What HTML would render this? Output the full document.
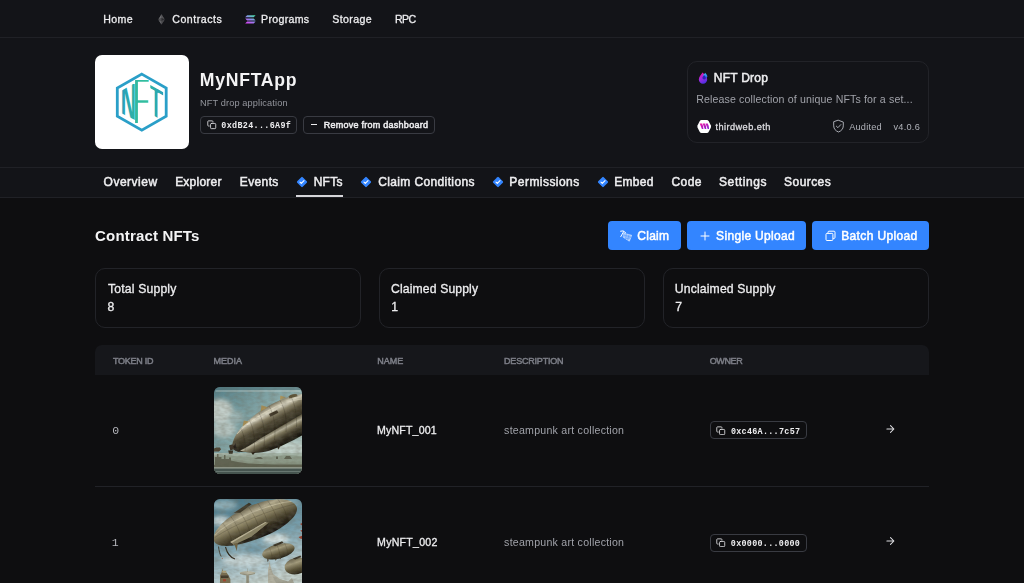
<!DOCTYPE html>
<html lang="en">
<head>
<meta charset="utf-8">
<title>MyNFTApp | thirdweb dashboard</title>
<style>
*{box-sizing:border-box;margin:0;padding:0}
html,body{width:1024px;height:583px;overflow:hidden;background:#0e0e10}
body{position:relative;font-family:"Liberation Sans",Arial,sans-serif;color:#ededef}
.abs{position:absolute}
.t{position:absolute;white-space:nowrap;line-height:1;font-weight:normal}
.b{font-weight:bold}
.s{-webkit-text-stroke:0.5px currentColor}
.m{-webkit-text-stroke:0.3px currentColor}
.mb{font-family:"Liberation Mono","DejaVu Sans Mono",monospace;font-weight:bold}
.mr{font-family:"Liberation Mono","DejaVu Sans Mono",monospace}
#topnav{position:absolute;left:0;top:0;width:1024px;height:38px;background:#131418;border-bottom:1px solid #202126}
#header{position:absolute;left:0;top:38px;width:1024px;height:129px;background:#131418}
#tabbar{position:absolute;left:0;top:167px;width:1024px;height:31px;background:#131418;border-top:1px solid #202126;border-bottom:1px solid #202126}
.btn-o{position:absolute;border:1px solid #393b42;border-radius:4px;height:18px}
.card{position:absolute;border:1px solid #222328;border-radius:10px}
.bbtn{position:absolute;top:221px;height:29px;background:#3385ff;border-radius:4px}
</style>
</head>
<body>

<div id="topnav"></div>
<div id="header"></div>
<div id="tabbar"></div>

<!-- nav icons -->
<svg class="abs" style="left:158px;top:14px" width="7" height="11" viewBox="0 0 7 11">
  <polygon points="3.5,0.2 6.6,5.5 3.5,10.6 0.4,5.5" fill="#4b4b4e"/>
  <polygon points="3.5,0.2 0.4,5.3 3.5,4.1" fill="#6c6c6f"/>
  <polygon points="3.5,0.2 3.5,4.1 6.6,5.3" fill="#535356"/>
  <polygon points="0.4,5.3 3.5,4.1 3.5,7.1" fill="#4c4c4f"/>
  <polygon points="3.5,4.1 6.6,5.3 3.5,7.1" fill="#2b2b2e"/>
  <polygon points="0.4,6 3.5,7.7 3.5,10.6" fill="#66666a"/>
  <polygon points="6.6,6 3.5,7.7 3.5,10.6" fill="#46464a"/>
</svg>
<svg class="abs" style="left:245px;top:15px" width="11" height="9" viewBox="0 0 11 9">
  <defs><linearGradient id="sol" x1="0.9" y1="0" x2="0.1" y2="1">
    <stop offset="0" stop-color="#45e0a4"/><stop offset="0.5" stop-color="#9088ee"/><stop offset="1" stop-color="#de3df6"/></linearGradient></defs>
  <path d="M2.1 0.3H10.6L8.7 2.3H0.2Z M0.2 3.4H8.7L10.6 5.4H2.1Z M2.1 6.5H10.6L8.7 8.5H0.2Z" fill="url(#sol)"/>
</svg>

<!-- copy icon (header address) -->
<svg class="abs" style="left:207.1px;top:120.2px" width="9.6" height="9.6" viewBox="0 0 10 10" fill="none" stroke="#dcdce0" stroke-width="0.9" stroke-linecap="round" stroke-linejoin="round">
  <rect x="3.7" y="3.6" width="5.4" height="5.4" rx="0.9"/>
  <path d="M2.3 6.3H1.6A0.8 0.8 0 0 1 0.8 5.500V1.7A0.8 0.8 0 0 1 1.6 0.9H5.400A0.8 0.8 0 0 1 6.200 1.7V2.3"/>
</svg>
<!-- minus icon -->
<div class="abs" style="left:311px;top:124px;width:6px;height:1px;background:#ededef"></div>

<!-- NFT drop icon -->
<svg class="abs" style="left:698px;top:72px" width="10" height="12" viewBox="0 0 10 12">
  <defs>
    <linearGradient id="dr1" x1="0.2" y1="0" x2="0.6" y2="1"><stop offset="0" stop-color="#f4149e"/><stop offset="0.5" stop-color="#a02be0"/><stop offset="1" stop-color="#4a2fe2"/></linearGradient>
    <linearGradient id="dr2" x1="0" y1="0" x2="0" y2="1"><stop offset="0" stop-color="#3cc8f4"/><stop offset="1" stop-color="#2a4be8"/></linearGradient>
  </defs>
  <path d="M4.6 0.6C6.2 2.6 9.2 4.9 9.2 7.6A4.2 4.2 0 0 1 0.8 7.6C0.8 4.9 3.2 2.6 4.6 0.6Z" fill="url(#dr1)"/>
  <path d="M7.2 0.8C8 2 9.4 3.1 9.4 4.6A2.3 2.3 0 0 1 4.9 4.6C4.9 3.1 6.4 2 7.2 0.8Z" fill="url(#dr2)"/>
  <path d="M6.2 3.2C6.9 4 7.9 4.9 7.9 6A1.8 1.8 0 0 1 4.4 6C4.4 4.9 5.5 4 6.2 3.2Z" fill="#2b22b8"/>
</svg>

<!-- thirdweb avatar -->
<svg class="abs" style="left:696.7px;top:119px" width="15" height="15" viewBox="0 0 15 15">
  <defs><linearGradient id="twg" x1="0" y1="0" x2="0.8" y2="1"><stop offset="0" stop-color="#f5149f"/><stop offset="1" stop-color="#8a22d4"/></linearGradient></defs>
  <path d="M4.5 0.9H9.9Q11 0.9 11.6 1.9L13.8 6.3Q14.3 7.5 13.8 8.7L11.6 13.1Q11 14.1 9.9 14.1H4.5Q3.4 14.1 2.8 13.1L0.6 8.7Q0.1 7.5 0.6 6.3L2.8 1.9Q3.4 0.9 4.5 0.9Z" fill="#fff"/>
  <path d="M2.7 4.4H5Q6.6 7.2 6.4 10H4.9Z M5.6 4.4H7.9Q9.5 7.2 9.3 10H7.8Z M8.5 4.4H10.8Q12.3 7.2 12.1 10H10.7Z" fill="url(#twg)"/>
</svg>

<!-- audited shield -->
<svg class="abs" style="left:832px;top:119px" width="13" height="14" viewBox="0 0 13 14" fill="none" stroke="#b0b2b9" stroke-width="0.95" stroke-linecap="round" stroke-linejoin="round">
  <path d="M6.5 1.3L11.3 3.1V6.9C11.3 9.9 9.2 12 6.5 13C3.8 12 1.7 9.9 1.7 6.9V3.1Z"/>
  <path d="M4.4 7.2L5.9 8.7L8.8 5.6"/>
</svg>

<!-- tab extension diamonds -->
<svg width="0" height="0" style="position:absolute"><defs>
  <g id="dia"><rect x="-3.9" y="-3.9" width="7.8" height="7.8" rx="1" transform="rotate(45)" fill="#3385ff"/><path d="M-2 0.1L-0.7 1.4L2 -1.3" fill="none" stroke="#fff" stroke-width="1.1" stroke-linecap="round" stroke-linejoin="round"/></g>
</defs></svg>
<svg class="abs" style="left:296px;top:176px" width="12" height="12" viewBox="-6 -6 12 12"><use href="#dia"/></svg>
<svg class="abs" style="left:360px;top:176px" width="12" height="12" viewBox="-6 -6 12 12"><use href="#dia"/></svg>
<svg class="abs" style="left:492px;top:176px" width="12" height="12" viewBox="-6 -6 12 12"><use href="#dia"/></svg>
<svg class="abs" style="left:596.5px;top:176px" width="12" height="12" viewBox="-6 -6 12 12"><use href="#dia"/></svg>

<!-- claim icon (pickaxe + gem) -->
<svg class="abs" style="left:619.5px;top:229.5px;z-index:3" width="13" height="12" viewBox="0 0 13 12" fill="none" stroke="#fff" stroke-linecap="round" stroke-linejoin="round">
  <path d="M0.6 1.1Q3.2 -0.4 5.7 2.7" stroke-width="1"/>
  <path d="M3.7 1.5L0.8 6.6" stroke-width="1"/>
  <path d="M4 3.3L11.6 5.2L10.9 7.6L9.3 11.2L3.5 7.4Z" fill="#fff" fill-opacity="0.5" stroke-width="0.5"/>
  <path d="M3.8 5.2L11.2 7M6.4 3.9L5.6 8.8M9 4.6L7.6 10M5.6 8.8L10.9 7.6" stroke="#3385ff" stroke-width="0.45" opacity="0.8"/>
</svg>
<!-- plus icon -->
<svg class="abs" style="left:699.5px;top:230.5px;z-index:3" width="10" height="10" viewBox="0 0 10 10" fill="none" stroke="#fff" stroke-width="1" stroke-linecap="round"><path d="M5 1V9M1 5H9"/></svg>
<!-- batch icon -->
<svg class="abs" style="left:824.5px;top:229.5px;z-index:3" width="12" height="12" viewBox="0 0 12 12" fill="none" stroke="#fff" stroke-width="1" stroke-linejoin="round">
  <rect x="1" y="3.4" width="6.9" height="7.1" rx="1"/>
  <path d="M3 3.2V2.2A1 1 0 0 1 4 1.2H9A1 1 0 0 1 10 2.2V7.4A1 1 0 0 1 9 8.4H8.1"/>
</svg>

<!-- row copy icons + arrows -->
<svg width="0" height="0" style="position:absolute"><defs>
  <g id="cpy" fill="none" stroke="#dcdce0" stroke-width="0.9" stroke-linecap="round" stroke-linejoin="round"><rect x="3.7" y="3.6" width="5.4" height="5.4" rx="0.9"/><path d="M2.3 6.3H1.6A0.8 0.8 0 0 1 0.8 5.500V1.7A0.8 0.8 0 0 1 1.6 0.9H5.400A0.8 0.8 0 0 1 6.200 1.7V2.3"/></g>
  <g id="arr" fill="none" stroke="#dedee2" stroke-width="1.05" stroke-linecap="round" stroke-linejoin="round"><path d="M1.900 5H8.800M5.500 1.600L8.900 5L5.500 8.400"/></g>
</defs></svg>
<svg class="abs" style="left:716.1px;top:425.5px" width="9.6" height="9.6" viewBox="0 0 10 10"><use href="#cpy"/></svg>
<svg class="abs" style="left:716.1px;top:537.9px" width="9.6" height="9.6" viewBox="0 0 10 10"><use href="#cpy"/></svg>
<svg class="abs" style="left:884.9px;top:424px" width="10" height="10" viewBox="0 0 10 10"><use href="#arr"/></svg>
<svg class="abs" style="left:884.9px;top:536.3px" width="10" height="10" viewBox="0 0 10 10"><use href="#arr"/></svg>


<!-- contract logo -->
<div class="abs" id="logo" style="left:95px;top:55px;width:94px;height:94px;background:#fff;border-radius:7px"></div>

<!-- contract logo artwork -->
<svg class="abs" style="left:95px;top:55px" width="94" height="94" viewBox="95 55 94 94" font-family="Liberation Sans, Arial, sans-serif" font-weight="bold">
  <defs>
    <linearGradient id="gN" x1="0" y1="0" x2="1" y2="0"><stop offset="0" stop-color="#279dbd"/><stop offset="1" stop-color="#2fb5a2"/></linearGradient>
    <linearGradient id="gF" x1="0" y1="0" x2="1" y2="0"><stop offset="0" stop-color="#2fb8a0"/><stop offset="1" stop-color="#34c09e"/></linearGradient>
    <linearGradient id="gT" x1="0" y1="0" x2="1" y2="0"><stop offset="0" stop-color="#2fb5a2"/><stop offset="1" stop-color="#279fba"/></linearGradient>
    <clipPath id="fclip" clipPathUnits="userSpaceOnUse">
      <rect x="135" y="78" width="2.9" height="46"/>
      <rect x="135" y="78.5" width="14" height="3.2"/>
      <rect x="135" y="100.3" width="13.6" height="2.5"/>
    </clipPath>
    <clipPath id="nclip" clipPathUnits="userSpaceOnUse">
      <polygon points="121,90.9 136,82.3 136,120.6 121,112.9"/>
    </clipPath>
    <clipPath id="tclip" clipPathUnits="userSpaceOnUse">
      <polygon points="150.3,85 163.2,92.2 163.2,95.8 150.3,88.6"/>
      <rect x="154.5" y="89" width="3.1" height="31"/>
    </clipPath>
  </defs>
  <polygon points="141.8,74.1 166.2,88 166.2,116.2 141.8,130.1 117.3,116.2 117.3,88" fill="none" stroke="#2a9fc8" stroke-width="2.8" stroke-linejoin="miter"/>
  <g font-size="10">
    <g clip-path="url(#nclip)"><text transform="translate(120.7,120.5) scale(2.12,5.45)" fill="url(#gN)">N</text></g>
    <g clip-path="url(#fclip)"><text transform="translate(132.9,122.8) scale(2.7,6.37)" fill="url(#gF)">F</text></g>
    <g clip-path="url(#tclip)"><text transform="translate(148.5,112.8) skewY(29) scale(2.5,4.4)" fill="url(#gT)">T</text></g>
  </g>
</svg>


<!-- address + remove buttons -->
<div class="btn-o" style="left:200px;top:116px;width:97px"></div>
<div class="btn-o" style="left:303px;top:116px;width:132px"></div>

<!-- published contract card -->
<div class="card" id="pubcard" style="left:687px;top:61px;width:242px;height:82px"></div>

<!-- active tab underline -->
<div class="abs" style="left:296px;top:195px;width:47px;height:2px;background:#d6d6da"></div>

<!-- action buttons -->
<div class="bbtn" style="left:608px;width:73px"></div>
<div class="bbtn" style="left:687px;width:119px"></div>
<div class="bbtn" style="left:812px;width:117px"></div>

<!-- supply stats -->
<div class="card" style="left:95px;top:268px;width:266px;height:60px"></div>
<div class="card" style="left:379px;top:268px;width:266px;height:60px"></div>
<div class="card" style="left:663px;top:268px;width:266px;height:60px"></div>

<!-- table -->
<div class="abs" id="thead" style="left:95px;top:345px;width:834px;height:30px;background:#16171b;border-radius:7px 7px 0 0"></div>
<div class="abs" style="left:95px;top:486px;width:834px;height:1px;background:#212227"></div>

<div class="btn-o" style="left:710px;top:421px;width:97px"></div>
<div class="btn-o" style="left:710px;top:533px;width:97px;top:533.5px"></div>

<!-- NFT media thumbnails -->
<svg class="abs" id="img0" style="left:214px;top:387px;border-radius:6px" width="88" height="87" viewBox="0 0 88 87">
  <defs>
    <linearGradient id="a_sky" x1="0" y1="0" x2="1" y2="0.9"><stop offset="0" stop-color="#557f87"/><stop offset="0.45" stop-color="#86a8a9"/><stop offset="1" stop-color="#b7c9c2"/></linearGradient>
    <linearGradient id="a_hull" gradientUnits="userSpaceOnUse" x1="50" y1="17" x2="63.5" y2="42"><stop offset="0" stop-color="#3f3a2a"/><stop offset="0.12" stop-color="#6f6852"/><stop offset="0.27" stop-color="#c9c4ae"/><stop offset="0.36" stop-color="#d9d5c2"/><stop offset="0.5" stop-color="#8a8268"/><stop offset="0.68" stop-color="#4f4834"/><stop offset="1" stop-color="#2a261a"/></linearGradient>
    <linearGradient id="a_hull2" gradientUnits="userSpaceOnUse" x1="64" y1="38" x2="73" y2="55"><stop offset="0" stop-color="#2a261a"/><stop offset="0.14" stop-color="#6a644e"/><stop offset="0.3" stop-color="#bab59e"/><stop offset="0.45" stop-color="#7b745a"/><stop offset="0.68" stop-color="#3e3828"/><stop offset="1" stop-color="#17140d"/></linearGradient>
    <linearGradient id="a_gnd" x1="0" y1="0" x2="0" y2="1"><stop offset="0" stop-color="#a9b9ad"/><stop offset="0.4" stop-color="#8b9886"/><stop offset="1" stop-color="#6c725e"/></linearGradient>
    <filter id="a_bl" x="-10%" y="-10%" width="120%" height="120%"><feGaussianBlur stdDeviation="0.55"/></filter>
    <filter id="a_nz" x="0" y="0" width="100%" height="100%"><feTurbulence type="fractalNoise" baseFrequency="0.16 0.3" numOctaves="2" seed="4"/><feColorMatrix type="matrix" values="0 0 0 0 0.16  0 0 0 0 0.15  0 0 0 0 0.11  0 0 0 1.4 -0.45"/></filter>
    <filter id="a_bl2" x="-20%" y="-20%" width="140%" height="140%"><feGaussianBlur stdDeviation="2.2"/></filter>
  </defs>
  <rect width="88" height="87" fill="url(#a_sky)"/>
  <g filter="url(#a_bl2)">
    <ellipse cx="6" cy="24" rx="13" ry="12" fill="#c3cfca"/>
    <ellipse cx="10" cy="42" rx="12" ry="9" fill="#b3c3bf"/>
    <ellipse cx="22" cy="30" rx="7" ry="6" fill="#9db6b5"/>
    <ellipse cx="70" cy="62" rx="24" ry="7" fill="#c2d2cb"/>
  </g>
  <rect x="0" y="66" width="88" height="21" fill="url(#a_gnd)"/>
  <g filter="url(#a_bl)">
    <path d="M0 70Q12 67.5 22 69T46 70T70 68.5T88 69.5V73H0Z" fill="#8f9d8c"/>
    <path d="M1 78V70H3V67H4.5V70H7.500V72H10V68H11.5V72H15V70.500H17V73.500L24 75L34 76.500L60 77.500H88V80.600H0V78Z" fill="#575a48" opacity="0.85"/>
    <path d="M40 72L44 70H47L49 72ZM62 72V69.5H64V72ZM70 72L72 69H76L78 72Z" fill="#5e6452"/>
    <path d="M0 61.5L2.5 60.5H6L7 62.5L5 64.5H0Z" fill="#4b4330"/>
    <!-- main hull (upper lobe) -->
    <path d="M18.2 60.6C18 55 21 48 27 41C35 31.5 47 22.5 61 15.5C70 11 80 8.2 88 7V31L45.5 56C41 59.500 36 63 30 65C25 65.600 20.500 64 18.200 60.600Z" fill="url(#a_hull)"/>
    <!-- lower lobe -->
    <path d="M26 63.500C33 60.500 40 56 45.500 52L88 27V48.500C78 54 66 60 56 63.500C46 66.600 34 67 26 63.500Z" fill="url(#a_hull2)"/>
    <path d="M18.2 60.6C19 62.8 22 64.6 26 65.2C23 63 21.5 60 22 56Z" fill="#221e14"/>
    <!-- hull plating ribs -->
    <g fill="none" stroke="#1f1b12" stroke-width="0.45" opacity="0.5">
      <path d="M27 41.5C30 48 32 57 31 65"/><path d="M35.5 33.5C39.5 41 41.5 52 40 64"/><path d="M45 26C49.5 34 51.5 46 50 59.5"/><path d="M55 19C60 27 62 40 60.5 53"/><path d="M66 13.5C71 21 73 33 72 45"/><path d="M77 9.8C81 17 83 28 82.5 40"/>
    </g>
    <path d="M23 47C33 36 50 24 70 16.5C77 14 83 12.6 88 12" fill="none" stroke="#efe9d2" stroke-width="0.9" opacity="0.55"/>
    <!-- gondola / hatch on top -->
    <path d="M55 27L63 23.2L64.4 25.8L56.5 29.8Z" fill="#3a3222"/>
    <path d="M74.5 9.5C76 7.6 80 6.6 83 7.4L83.5 9.2L75.5 11.6Z" fill="#5d5238"/>
    <!-- dorsal spikes -->
    <path d="M28.5 39.5L29.8 33.6L35 34.6Z" fill="#a88f55"/>
    <path d="M46.5 24.5L47.5 18.2L53.5 20.2Z" fill="#a88f55"/>
    <path d="M66 13L66.4 8.4L72 10.4Z" fill="#ad955c"/>
    <!-- nose cap + engine -->
    <path d="M15 58.5L18.6 57.2L20.4 62L16.4 63.4Z" fill="#3a3325"/>
    <path d="M14.2 63.5H19.2L18.5 66.8H15Z" fill="#2f291d"/>
    <path d="M37 65.4L39 68L41.5 65Z M63 59.8L64.5 62.4L66.5 58.6Z" fill="#2a2418"/>
  </g>
  <rect width="88" height="87" filter="url(#a_nz)" opacity="0.45"/>
  <!-- printed frame lines -->
  <rect x="1.5" y="3.6" width="85" height="0.8" fill="#d3ddd8" opacity="0.7"/>
  <rect x="0" y="0" width="88" height="3" fill="#4c6f76" opacity="0.55"/>
  <rect x="0" y="80.6" width="88" height="0.9" fill="#cfd8d2" opacity="0.85"/>
  <rect x="0" y="81.5" width="88" height="5.5" fill="#46544f"/>
  <rect x="2" y="84.2" width="84" height="0.6" fill="#9aa9a2" opacity="0.7"/>
</svg>

<svg class="abs" id="img1" style="left:214px;top:499px;border-radius:6px 6px 0 0" width="88" height="84" viewBox="0 0 88 84">
  <defs>
    <linearGradient id="b_sky" x1="0.2" y1="0" x2="0.5" y2="1"><stop offset="0" stop-color="#4a7686"/><stop offset="0.5" stop-color="#789fad"/><stop offset="0.85" stop-color="#b3c9ce"/><stop offset="1" stop-color="#c3d0cc"/></linearGradient>
    <linearGradient id="b_hull" x1="0.42" y1="0" x2="0.56" y2="1"><stop offset="0" stop-color="#635c46"/><stop offset="0.18" stop-color="#b2aa8e"/><stop offset="0.4" stop-color="#918868"/><stop offset="0.58" stop-color="#5e563c"/><stop offset="0.78" stop-color="#302a1c"/><stop offset="1" stop-color="#191610"/></linearGradient>
    <linearGradient id="b_hull2" x1="0.4" y1="0" x2="0.55" y2="1"><stop offset="0" stop-color="#665f48"/><stop offset="0.3" stop-color="#a39b7c"/><stop offset="0.65" stop-color="#595136"/><stop offset="1" stop-color="#231e14"/></linearGradient>
    <filter id="b_bl" x="-10%" y="-10%" width="120%" height="120%"><feGaussianBlur stdDeviation="0.5"/></filter>
    <filter id="b_nz" x="0" y="0" width="100%" height="100%"><feTurbulence type="fractalNoise" baseFrequency="0.16 0.3" numOctaves="2" seed="9"/><feColorMatrix type="matrix" values="0 0 0 0 0.16  0 0 0 0 0.15  0 0 0 0 0.11  0 0 0 1.4 -0.45"/></filter>
    <filter id="b_bl2" x="-30%" y="-30%" width="160%" height="160%"><feGaussianBlur stdDeviation="2"/></filter>
  </defs>
  <rect width="88" height="84" fill="url(#b_sky)"/>
  <g filter="url(#b_bl2)">
    <ellipse cx="10" cy="6" rx="13" ry="5" fill="#8fb0ba"/>
    <ellipse cx="7" cy="22" rx="9" ry="5" fill="#c6d6d8"/>
    <ellipse cx="62" cy="40" rx="13" ry="5" fill="#d3dfdf"/>
    <ellipse cx="30" cy="62" rx="22" ry="6" fill="#c4d4d6"/>
    <ellipse cx="74" cy="4" rx="12" ry="4" fill="#86a8b3"/>
    <ellipse cx="40" cy="50" rx="10" ry="4" fill="#6f97a6"/>
  </g>
  <g filter="url(#b_bl)">
    <!-- main airship -->
    <g transform="translate(41.5,25.3) rotate(-22)">
      <path d="M-44.7 0C-43.5 -11 -22 -19 3 -19C27 -19 44 -11.5 44.7 -1C45 7 27 14.500 3 14.500C-22 14.500 -44.5 9.500 -44.7 0Z" fill="url(#b_hull)"/>
      <g fill="none" stroke="#2d2618" stroke-width="0.4" opacity="0.5">
        <path d="M-30 -13.5C-27 -5 -27 5 -30 11.5"/><path d="M-20 -16.5C-17 -6 -17 6 -20 13.3"/><path d="M-10 -18.4C-7 -7 -7 6 -10 14.2"/><path d="M0 -19C3 -7 3 6 0 14.5"/><path d="M10 -18.8C13 -7 13 6 10 14.3"/><path d="M20 -17.5C23 -6 23 5 20 13"/><path d="M30 -15C33 -5 33 4 30 10.500"/>
        <path d="M-43 -3C-20 -8 20 -8 44 -4"/>
      </g>
      <path d="M-42 -5C-25 -13 15 -15 42 -8" fill="none" stroke="#e6dec2" stroke-width="1" opacity="0.4"/>
      <!-- top fin / cabin -->
      <path d="M-16 -18.6L2 -22.500L4 -20L-10 -16.600Z" fill="#3b3526"/>
      <!-- side fin -->
      <path d="M-30 7L10 1.500L13 3.500L-8 10L-28 11Z" fill="#898264"/>
      <path d="M-30 7L10 1.500L11 2.200L-29 8.400Z" fill="#c2ba9c"/>
      <path d="M-8 10L13 3.500L9 8L-4 13Z" fill="#2b2418"/>
    </g>
    <!-- tail tusks -->
    <path d="M4.500 47.500C5 52 6 55.500 7.200 57.500" fill="none" stroke="#3a3222" stroke-width="0.9"/>
    <path d="M11.500 48C13 54 16.500 58.500 21 60" fill="none" stroke="#2d2619" stroke-width="1.1"/>
    <path d="M20 44.500L22.800 52L23.800 44Z" fill="#6d603f"/>
    <!-- second airship -->
    <g transform="translate(64.4,52.3) rotate(-14)">
      <ellipse cx="0" cy="0" rx="16.6" ry="7.3" fill="url(#b_hull2)"/>
      <path d="M-4 -7.4L6 -8.8L7 -7L-2 -5.8Z" fill="#352e20"/>
      <g fill="none" stroke="#2d2618" stroke-width="0.35" opacity="0.5"><path d="M-8 -6.4C-7 -2 -7 3 -8 6.4"/><path d="M0 -7.3C1 -2 1 3 0 7.3"/><path d="M8 -6.4C9 -2 9 3 8 6.4"/></g>
    </g>
    <path d="M53 60L53.8 63.2L54.8 60.4Z M61 59L61.8 62L62.8 59Z M65.5 58L66.4 60.6L67.2 57.6Z" fill="#3a3222"/>
    <!-- third airship (cropped) -->
    <g transform="translate(82.5,67) rotate(-12)">
      <ellipse cx="0" cy="0" rx="12" ry="8.2" fill="url(#b_hull2)"/>
      <path d="M-2 -8.2L6 -9.4L6.6 -7.8L0 -6.6Z" fill="#352e20"/>
    </g>
    <!-- red pennants -->
    <path d="M86 25L88 24V26.600Z M84.500 38L88 36.800V40L86 39.400Z M86.200 31.400L88 31V33Z" fill="#93402e"/>
    <path d="M7.500 59.300L8.800 58.700L8.600 60.300Z" fill="#a5603c"/>
    <!-- ground structures -->
    <path d="M54 84V70.5L55 66.5L55.6 61.5L56.3 66.5L57.5 70.5L59 75L66 80L72 82L75 84Z" fill="#b3b2a2"/>
    <path d="M55 70.5H57.5M54.5 75H59" stroke="#8d8a78" stroke-width="0.4"/>
    <path d="M59 78L74 82.5L78 79L80 84H62Z" fill="#a3a394"/>
    <path d="M25.5 73.5Q33.5 70.4 41.5 73.5Q41.8 75.6 33.5 76.6Q25.2 75.6 25.5 73.500Z" fill="#b7b5a2"/>
    <path d="M26 74.6Q33.5 77.4 41 74.6" fill="none" stroke="#6d6a58" stroke-width="0.5"/>
    <path d="M33.5 69.5V73M32.4 76.5H34.8V84H32.4Z" stroke="#8f8c78" stroke-width="0.4" fill="#8f8c78"/>
    <path d="M6 84V76.5L7.6 73.6L8.3 69.5L9.2 73.6H12.6L14.5 76.5L16.4 80V84Z" fill="#7a6e50"/>
    <path d="M7 76.5H14.5V79H7Z" fill="#3a3324"/>
    <path d="M9 80.2H12V82.4H9Z" fill="#a5402c"/>
    <path d="M7.6 73.6H12.6L11.6 71.8H8.6Z" fill="#b5a67a"/>
  </g>
  <rect width="88" height="84" filter="url(#b_nz)" opacity="0.45"/>
</svg>


<div id="labels" style="position:absolute;left:0;top:0;width:1024px;height:583px;will-change:transform">
<nav aria-label="Main navigation">
<span id="n1" class="t m" style="left:103.34px;top:14.13px;font-size:10.6px;color:#ededef;letter-spacing:0.318px;">Home</span>
<span id="n2" class="t m" style="left:172.22px;top:14.13px;font-size:10.6px;color:#ededef;letter-spacing:0.529px;">Contracts</span>
<span id="n3" class="t m" style="left:261.12px;top:14.13px;font-size:10.6px;color:#ededef;letter-spacing:0.306px;">Programs</span>
<span id="n4" class="t m" style="left:332.37px;top:14.13px;font-size:10.6px;color:#ededef;letter-spacing:0.353px;">Storage</span>
<span id="n5" class="t m" style="left:394.89px;top:14.13px;font-size:10.6px;color:#ededef;letter-spacing:-0.502px;">RPC</span>
</nav>
<header aria-label="Contract header">
<h1 id="h1" class="t b" style="left:199.84px;top:71.50px;font-size:17.6px;color:#f4f4f5;letter-spacing:0.738px;">MyNFTApp</h1>
<p id="sub" class="t r" style="left:200.05px;top:98.61px;font-size:9.2px;color:#94969d;letter-spacing:0.123px;">NFT drop application</p>
<span id="addr" class="t mb" style="left:221.36px;top:121.66px;font-size:8.4px;color:#ededef;letter-spacing:0.349px;">0xdB24...6A9f</span>
<span id="rem" class="t s" style="left:323.82px;top:121.38px;font-size:9px;color:#ededef;letter-spacing:0.252px;">Remove from dashboard</span>
<span id="c1" class="t s" style="left:713.84px;top:72.09px;font-size:12px;color:#ededef;letter-spacing:0.236px;">NFT Drop</span>
<span id="c2" class="t r" style="left:696.14px;top:94.23px;font-size:10.6px;color:#a0a2a9;letter-spacing:0.140px;">Release collection of unique NFTs for a set...</span>
<span id="c3" class="t m" style="left:715.59px;top:123.21px;font-size:9.2px;color:#dedee2;letter-spacing:0.420px;">thirdweb.eth</span>
<span id="c4" class="t r" style="left:849.19px;top:123.21px;font-size:9.2px;color:#b0b2b9;letter-spacing:0.207px;">Audited</span>
<span id="c5" class="t r" style="left:893.44px;top:123.21px;font-size:9.2px;color:#b0b2b9;letter-spacing:0.265px;">v4.0.6</span>
</header>
<nav aria-label="Contract tabs">
<span id="t1" class="t s" style="left:103.60px;top:176.09px;font-size:12px;color:#ededef;letter-spacing:0.499px;">Overview</span>
<span id="t2" class="t s" style="left:175.15px;top:176.09px;font-size:12px;color:#ededef;letter-spacing:0.230px;">Explorer</span>
<span id="t3" class="t s" style="left:239.83px;top:176.09px;font-size:12px;color:#ededef;letter-spacing:0.367px;">Events</span>
<span id="t4" class="t s" style="left:313.71px;top:176.09px;font-size:12px;color:#ededef;letter-spacing:0.229px;">NFTs</span>
<span id="t5" class="t s" style="left:378.18px;top:176.09px;font-size:12px;color:#ededef;letter-spacing:0.373px;">Claim Conditions</span>
<span id="t6" class="t s" style="left:509.35px;top:176.09px;font-size:12px;color:#ededef;letter-spacing:0.456px;">Permissions</span>
<span id="t7" class="t s" style="left:614.16px;top:176.09px;font-size:12px;color:#ededef;letter-spacing:0.338px;">Embed</span>
<span id="t8" class="t s" style="left:671.57px;top:176.09px;font-size:12px;color:#ededef;letter-spacing:0.366px;">Code</span>
<span id="t9" class="t s" style="left:719.00px;top:176.09px;font-size:12px;color:#ededef;letter-spacing:0.606px;">Settings</span>
<span id="t10" class="t s" style="left:784.09px;top:176.09px;font-size:12px;color:#ededef;letter-spacing:0.439px;">Sources</span>
</nav>
<section aria-label="Contract NFTs">
<h2 id="h2" class="t b" style="left:95.05px;top:228.30px;font-size:15px;color:#f4f4f5;letter-spacing:0.179px;">Contract NFTs</h2>
<span id="b1" class="t s" style="left:637.29px;top:229.59px;font-size:12px;color:#ffffff;letter-spacing:0.267px;">Claim</span>
<span id="b2" class="t s" style="left:716.12px;top:229.59px;font-size:12px;color:#ffffff;letter-spacing:0.324px;">Single Upload</span>
<span id="b3" class="t s" style="left:841.13px;top:229.59px;font-size:12px;color:#ffffff;letter-spacing:0.374px;">Batch Upload</span>
<span id="s1" class="t m" style="left:108.07px;top:282.67px;font-size:12.2px;color:#ededef;letter-spacing:0.169px;">Total Supply</span>
<span id="s1v" class="t m" style="left:107.54px;top:301.42px;font-size:12.2px;color:#ededef;">8</span>
<span id="s2" class="t m" style="left:391.12px;top:282.67px;font-size:12.2px;color:#ededef;letter-spacing:0.119px;">Claimed Supply</span>
<span id="s2v" class="t m" style="left:391.28px;top:301.42px;font-size:12.2px;color:#ededef;">1</span>
<span id="s3" class="t m" style="left:674.79px;top:282.67px;font-size:12.2px;color:#ededef;letter-spacing:0.154px;">Unclaimed Supply</span>
<span id="s3v" class="t m" style="left:675.19px;top:301.42px;font-size:12.2px;color:#ededef;">7</span>
</section>
<section aria-label="NFT table">
<span id="th1" class="t s" style="left:113.00px;top:356.63px;font-size:9px;color:#7c7e86;letter-spacing:-0.272px;">TOKEN ID</span>
<span id="th2" class="t s" style="left:213.49px;top:356.63px;font-size:9px;color:#7c7e86;letter-spacing:-0.004px;">MEDIA</span>
<span id="th3" class="t s" style="left:377.13px;top:356.63px;font-size:9px;color:#7c7e86;letter-spacing:0.025px;">NAME</span>
<span id="th4" class="t s" style="left:504.06px;top:356.63px;font-size:9px;color:#7c7e86;letter-spacing:-0.198px;">DESCRIPTION</span>
<span id="th5" class="t s" style="left:709.77px;top:356.63px;font-size:9px;color:#7c7e86;letter-spacing:-0.406px;">OWNER</span>
<span id="r0id" class="t mr" style="left:112.22px;top:425.18px;font-size:11.5px;color:#b4b5bb;">0</span>
<span id="r0n" class="t m" style="left:377.08px;top:425.03px;font-size:10.6px;color:#ededef;letter-spacing:0.161px;">MyNFT_001</span>
<span id="r0d" class="t r" style="left:504.12px;top:425.03px;font-size:10.6px;color:#a0a2a9;letter-spacing:0.246px;">steampunk art collection</span>
<span id="r0o" class="t mb" style="left:730.91px;top:428.31px;font-size:8.4px;color:#ededef;letter-spacing:0.314px;">0xc46A...7c57</span>
<span id="r1id" class="t mr" style="left:111.68px;top:537.43px;font-size:11.5px;color:#b4b5bb;">1</span>
<span id="r1n" class="t m" style="left:377.08px;top:537.28px;font-size:10.6px;color:#ededef;letter-spacing:0.248px;">MyNFT_002</span>
<span id="r1d" class="t r" style="left:504.12px;top:537.28px;font-size:10.6px;color:#a0a2a9;letter-spacing:0.246px;">steampunk art collection</span>
<span id="r1o" class="t mb" style="left:730.87px;top:539.56px;font-size:8.4px;color:#ededef;letter-spacing:0.302px;">0x0000...0000</span>
</section>
</div>

</body>
</html>
